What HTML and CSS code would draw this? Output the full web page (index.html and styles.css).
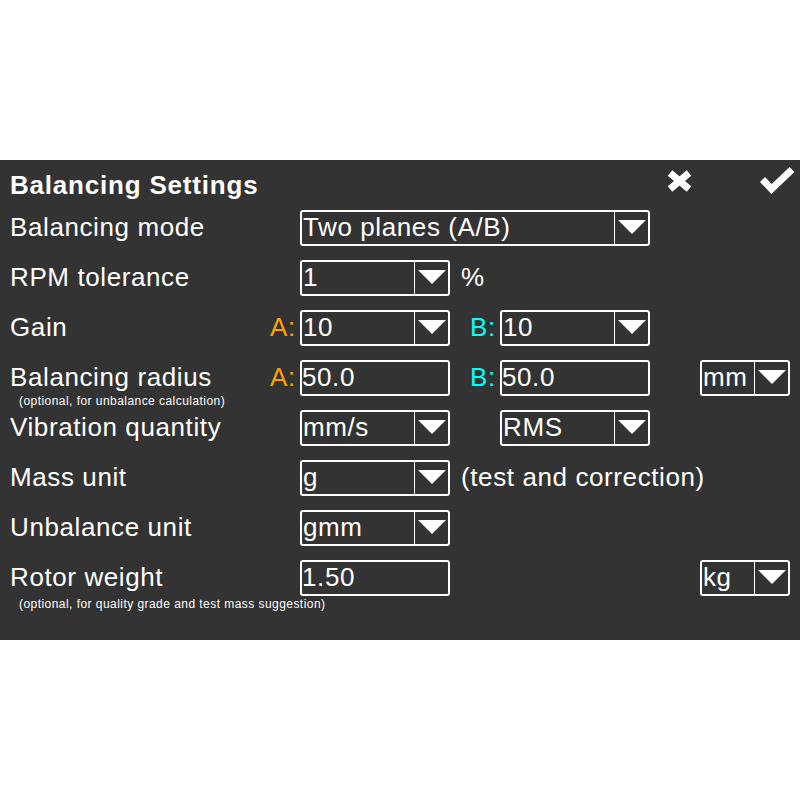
FILE: index.html
```html
<!DOCTYPE html>
<html>
<head>
<meta charset="utf-8">
<title>Balancing Settings</title>
<link rel="stylesheet" href="styles.css">
</head>
<body>
<div class="panel">
  <div class="title-row">
    <h1 class="title">Balancing Settings</h1>
    <div class="actions">
      <svg class="icon-x" width="30" height="26" viewBox="0 0 30 26"><path d="M5 5 L24 21 M24 5 L5 21" stroke="#fff" stroke-width="7" fill="none"/></svg>
      <svg class="icon-check" width="42" height="34" viewBox="0 0 42 34"><path d="M6.5 15.5 L15.5 25 L36 5.5" stroke="#fff" stroke-width="7" fill="none" stroke-linejoin="miter"/></svg>
    </div>
  </div>
  <div class="grid">
    <div class="label">Balancing mode</div>
    <div class="dd c-wide"><span class="val">Two planes (A/B)</span><span class="arrow"></span></div>

    <div class="label">RPM tolerance</div>
    <div class="dd c-box1"><span class="val">1</span><span class="arrow"></span></div>
    <div class="after c-after">%</div>

    <div class="label">Gain</div>
    <div class="tag tag-a c-a">A:</div>
    <div class="dd c-box1"><span class="val">10</span><span class="arrow"></span></div>
    <div class="tag tag-b c-b">B:</div>
    <div class="dd c-box2"><span class="val">10</span><span class="arrow"></span></div>

    <div class="label">Balancing radius<div class="sub">(optional, for unbalance calculation)</div></div>
    <div class="tag tag-a c-a">A:</div>
    <div class="tb c-box1">50.0</div>
    <div class="tag tag-b c-b">B:</div>
    <div class="tb c-box2">50.0</div>
    <div class="dd c-unit"><span class="val">mm</span><span class="arrow"></span></div>

    <div class="label">Vibration quantity</div>
    <div class="dd c-box1"><span class="val">mm/s</span><span class="arrow"></span></div>
    <div class="dd c-box2"><span class="val">RMS</span><span class="arrow"></span></div>

    <div class="label">Mass unit</div>
    <div class="dd c-box1"><span class="val">g</span><span class="arrow"></span></div>
    <div class="after c-after">(test and correction)</div>

    <div class="label">Unbalance unit</div>
    <div class="dd c-box1"><span class="val">gmm</span><span class="arrow"></span></div>

    <div class="label">Rotor weight<div class="sub sub-low">(optional, for quality grade and test mass suggestion)</div></div>
    <div class="tb c-box1">1.50</div>
    <div class="dd c-unit"><span class="val">kg</span><span class="arrow"></span></div>
  </div>
</div>
</body>
</html>
```

FILE: styles.css
```css
html, body {
  margin: 0;
  padding: 0;
  background: #ffffff;
}

body {
  font-family: "Liberation Sans", Arial, sans-serif;
  color: #ffffff;
}

.panel {
  margin-top: 160px;
  height: 480px;
  background: #333333;
  padding-left: 10px;
  box-sizing: border-box;
}

.title-row {
  display: flex;
  height: 50px;
}

.title {
  margin: 0;
  font-size: 26px;
  font-weight: bold;
  line-height: 50px;
  letter-spacing: 0.8px;
}

.actions {
  margin-left: auto;
  display: flex;
  align-items: flex-start;
}

.icon-x {
  display: block;
  margin-top: 8px;
}

.icon-check {
  display: block;
  margin-top: 4px;
  margin-left: 61px;
  margin-right: 2px;
}

.grid {
  display: grid;
  grid-template-columns: 260px 30px 150px 20px 30px 150px 50px 90px;
  grid-auto-rows: 50px;
  align-items: start;
  font-size: 26px;
  letter-spacing: 0.6px;
}

.label {
  grid-column: 1;
  line-height: 34px;
  white-space: nowrap;
}

.sub {
  font-size: 12px;
  line-height: 14px;
  letter-spacing: 0.45px;
  margin-left: 9px;
  margin-top: 0;
}

.sub-low {
  margin-top: 3px;
}

.c-a { grid-column: 2; }
.c-box1 { grid-column: 3; }
.c-b { grid-column: 5; }
.c-box2 { grid-column: 6; }
.c-unit { grid-column: 8; }
.c-wide { grid-column: 3 / span 4; }
.c-after { grid-column: 4 / span 5; }

.tag {
  line-height: 34px;
}

.tag-a { color: #ffa000; }
.tag-b { color: #00ffff; }

.after {
  line-height: 34px;
  padding-left: 11px;
  white-space: nowrap;
}

.dd, .tb {
  height: 36px;
  box-sizing: border-box;
  border: 2px solid #ffffff;
  border-radius: 3px;
}

.dd {
  display: flex;
}

.val {
  flex: 1;
  line-height: 31px;
  padding-left: 1px;
  white-space: nowrap;
  overflow: hidden;
}

.arrow {
  width: 33px;
  border-left: 1px solid #ffffff;
  display: flex;
  align-items: center;
  justify-content: center;
}

.arrow::after {
  content: "";
  width: 0;
  height: 0;
  border-left: 14.5px solid transparent;
  border-right: 14.5px solid transparent;
  border-top: 14px solid #ffffff;
  margin-top: -2px;
}

.tb {
  line-height: 31px;
  padding-left: 0;
  white-space: nowrap;
}
```
